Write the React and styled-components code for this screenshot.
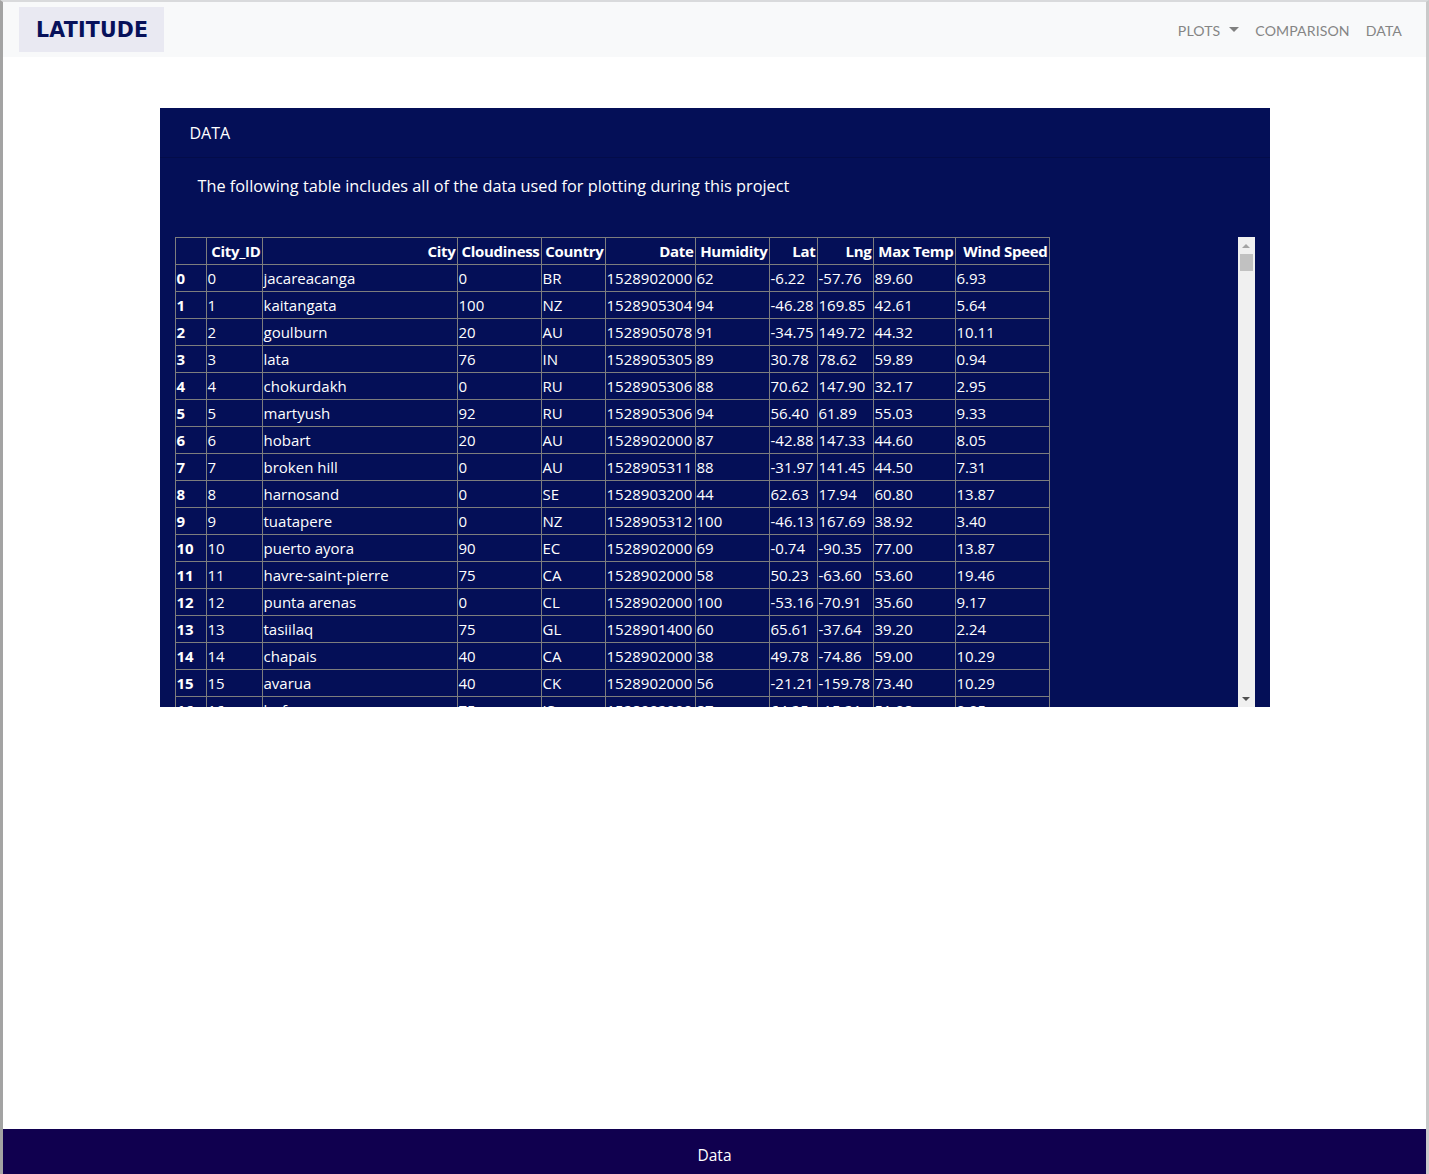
import React from 'react';
import styled, { createGlobalStyle } from 'styled-components';

const GlobalStyle = createGlobalStyle`
  html, body {
    margin: 0;
    padding: 0;
    background: #fff;
  }
  body {
    font-family: "Open Sans", "Noto Sans", sans-serif;
    font-size: 16px;
    color: #212529;
  }
`;

const Frame = styled.div`
  min-height: 100vh;
  box-sizing: border-box;
  display: flex;
  flex-direction: column;
  border-top: 2px solid #d9dadc;
  border-left: 3px solid #a3a3a3;
  border-right: 3px solid #c9c9c9;
`;

const Navbar = styled.nav`
  height: 55px;
  background: #f8f9fa;
  display: flex;
  align-items: center;
  justify-content: space-between;
  padding: 0 16px;
`;

const Brand = styled.a`
  display: flex;
  align-items: center;
  height: 45px;
  padding: 0 16px 0 17px;
  background: #e9e9f2;
  color: #07115a;
  font-family: "DejaVu Sans", Verdana, sans-serif;
  font-weight: bold;
  font-size: 20.5px;
  letter-spacing: 0.2px;
  text-decoration: none;
`;

const NavList = styled.ul`
  display: flex;
  list-style: none;
  margin: 0;
  padding: 0;
`;

const NavLink = styled.a`
  display: flex;
  align-items: center;
  padding: 10px 8px 8px;
  color: #858585;
  font-family: Lato, sans-serif;
  font-size: 14.1px;
  letter-spacing: 0.1px;
  text-decoration: none;
`;

const Caret = styled.span`
  display: inline-block;
  margin-left: 9px;
  margin-top: -2px;
  border-top: 5px solid #808080;
  border-left: 5px solid transparent;
  border-right: 5px solid transparent;
`;

const Main = styled.main`
  flex: 1;
  padding-top: 51px;
`;

const Card = styled.section`
  width: 1110px;
  margin: 0 auto;
  background: #040f57;
  color: #fff;
`;

const CardHeader = styled.div`
  height: 50px;
  display: flex;
  align-items: center;
  padding: 0 30px;
  border-bottom: 1px solid rgba(0, 0, 0, 0.15);
  box-sizing: border-box;
`;

const Lead = styled.p`
  box-sizing: border-box;
  margin: 0;
  padding: 16px 38px 0;
  height: 62px;
  line-height: 24px;
  font-size: 16.3px;
`;

const TableBox = styled.div`
  margin: 17px 15px 0;
  height: 470px;
  display: flex;
`;

const Viewport = styled.div`
  flex: 1;
  overflow: hidden;
`;

const ScrollTrack = styled.div`
  width: 17px;
  background: #f0f0f0;
  display: flex;
  flex-direction: column;
  align-items: center;
`;

const ScrollButton = styled.div`
  height: 17px;
  width: 17px;
  display: flex;
  align-items: center;
  justify-content: center;
`;

const Arrow = styled.span`
  width: 0;
  height: 0;
  border-left: 4px solid transparent;
  border-right: 4px solid transparent;
  ${({ $down }) =>
    $down ? 'border-top: 4px solid #505050;' : 'border-bottom: 4px solid #a3a3a3;'}
`;

const ScrollSpace = styled.div`
  flex: 1;
  width: 100%;
`;

const Thumb = styled.div`
  height: 17px;
  width: 13px;
  background: #c1c1c1;
`;

const Table = styled.table`
  border-collapse: collapse;
  table-layout: fixed;
  width: 874px;
  color: #fff;
  font-size: 15px;
  line-height: 25px;
  border: 1px solid #606060;
`;

const HeadCell = styled.th`
  border: 1px solid #7d7d7d;
  padding: 1px 1px 0;
  text-align: right;
  font-weight: bold;
  white-space: nowrap;
  letter-spacing: -0.3px;
`;

const IndexCell = styled.th`
  border: 1px solid #7d7d7d;
  padding: 1px 1px 0;
  text-align: left;
  font-weight: bold;
`;

const Cell = styled.td`
  border: 1px solid #7d7d7d;
  padding: 1px 1px 0;
  text-align: left;
  white-space: nowrap;
  overflow: hidden;
`;

const Footer = styled.footer`
  height: 45px;
  box-sizing: border-box;
  padding-top: 6px;
  background: #10004f;
  color: #fff;
  display: flex;
  align-items: center;
  justify-content: center;
  font-size: 15.5px;
`;

const columns = [
  ['', 31],
  ['City_ID', 56],
  ['City', 195],
  ['Cloudiness', 84],
  ['Country', 64],
  ['Date', 90],
  ['Humidity', 74],
  ['Lat', 48],
  ['Lng', 56],
  ['Max Temp', 82],
  ['Wind Speed', 94],
];

const rows = [
  ['jacareacanga', 0, 'BR', 1528902000, 62, '-6.22', '-57.76', '89.60', '6.93'],
  ['kaitangata', 100, 'NZ', 1528905304, 94, '-46.28', '169.85', '42.61', '5.64'],
  ['goulburn', 20, 'AU', 1528905078, 91, '-34.75', '149.72', '44.32', '10.11'],
  ['lata', 76, 'IN', 1528905305, 89, '30.78', '78.62', '59.89', '0.94'],
  ['chokurdakh', 0, 'RU', 1528905306, 88, '70.62', '147.90', '32.17', '2.95'],
  ['martyush', 92, 'RU', 1528905306, 94, '56.40', '61.89', '55.03', '9.33'],
  ['hobart', 20, 'AU', 1528902000, 87, '-42.88', '147.33', '44.60', '8.05'],
  ['broken hill', 0, 'AU', 1528905311, 88, '-31.97', '141.45', '44.50', '7.31'],
  ['harnosand', 0, 'SE', 1528903200, 44, '62.63', '17.94', '60.80', '13.87'],
  ['tuatapere', 0, 'NZ', 1528905312, 100, '-46.13', '167.69', '38.92', '3.40'],
  ['puerto ayora', 90, 'EC', 1528902000, 69, '-0.74', '-90.35', '77.00', '13.87'],
  ['havre-saint-pierre', 75, 'CA', 1528902000, 58, '50.23', '-63.60', '53.60', '19.46'],
  ['punta arenas', 0, 'CL', 1528902000, 100, '-53.16', '-70.91', '35.60', '9.17'],
  ['tasiilaq', 75, 'GL', 1528901400, 60, '65.61', '-37.64', '39.20', '2.24'],
  ['chapais', 40, 'CA', 1528902000, 38, '49.78', '-74.86', '59.00', '10.29'],
  ['avarua', 40, 'CK', 1528902000, 56, '-21.21', '-159.78', '73.40', '10.29'],
  ['hofn', 75, 'IS', 1528902000, 87, '64.25', '-15.21', '51.08', '0.05'],
  ['rikitea', 88, 'PF', 1528902000, 100, '-23.12', '-134.97', '73.49', '14.99'],
  ['ushuaia', 40, 'AR', 1528902000, 86, '-54.81', '-68.31', '33.80', '4.70'],
];

function DataTable() {
  return (
    <Table>
      <colgroup>
        {columns.map(([name, w]) => (
          <col key={name || 'idx'} style={{ width: w }} />
        ))}
      </colgroup>
      <thead>
        <tr>
          {columns.map(([name]) => (
            <HeadCell key={name || 'idx'}>{name}</HeadCell>
          ))}
        </tr>
      </thead>
      <tbody>
        {rows.map((r, i) => (
          <tr key={i}>
            <IndexCell>{i}</IndexCell>
            <Cell>{i}</Cell>
            {r.map((v, j) => (
              <Cell key={j}>{v}</Cell>
            ))}
          </tr>
        ))}
      </tbody>
    </Table>
  );
}

export default function App() {
  return (
    <>
      <GlobalStyle />
      <Frame>
        <Navbar>
          <Brand href="#">LATITUDE</Brand>
          <NavList>
            <li>
              <NavLink href="#">
                PLOTS
                <Caret />
              </NavLink>
            </li>
            <li>
              <NavLink href="#">COMPARISON</NavLink>
            </li>
            <li>
              <NavLink href="#">DATA</NavLink>
            </li>
          </NavList>
        </Navbar>
        <Main>
          <Card>
            <CardHeader>DATA</CardHeader>
            <Lead>The following table includes all of the data used for plotting during this project</Lead>
            <TableBox>
              <Viewport>
                <DataTable />
              </Viewport>
              <ScrollTrack>
                <ScrollButton>
                  <Arrow />
                </ScrollButton>
                <Thumb />
                <ScrollSpace />
                <ScrollButton>
                  <Arrow $down />
                </ScrollButton>
              </ScrollTrack>
            </TableBox>
          </Card>
        </Main>
        <Footer>Data</Footer>
      </Frame>
    </>
  );
}
